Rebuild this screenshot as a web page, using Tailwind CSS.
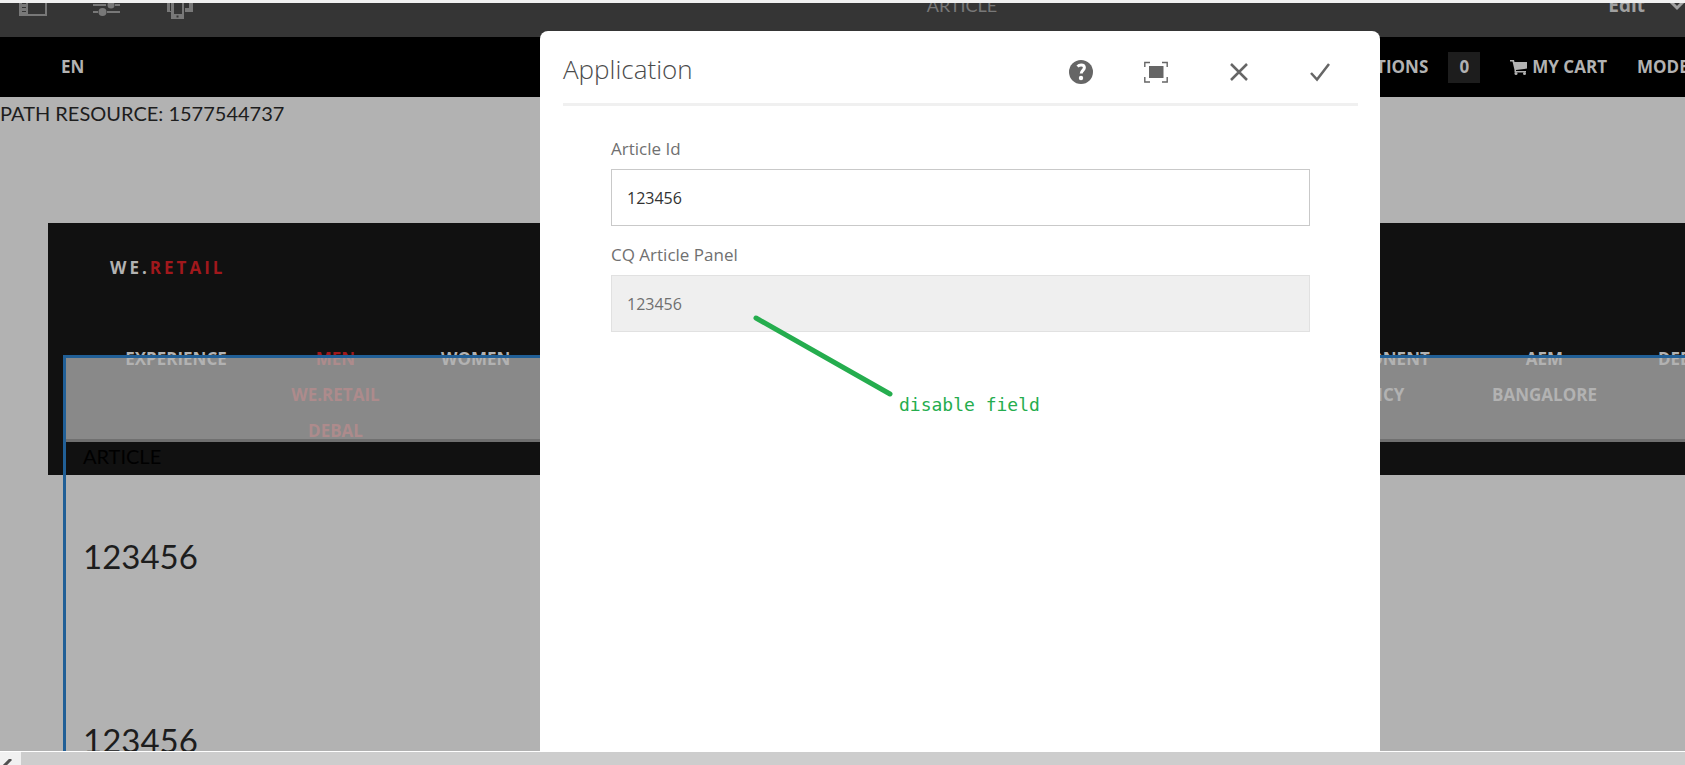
<!DOCTYPE html>
<html lang="en" class="h-full">
<head>
  <meta charset="UTF-8">
  <meta name="viewport" content="width=device-width, initial-scale=1.0">
  <title>Article</title>
  <script src="https://cdn.jsdelivr.net/npm/@tailwindcss/browser@4"></script>
</head>
<body class="relative flex h-full flex-col overflow-hidden bg-[#b2b2b2] font-['Lato',sans-serif] text-[#1d1d1d]">
  <!-- Editor toolbar, scrolled partly out of view -->
  <div class="h-[3px] shrink-0 bg-[#f0f0f0]"></div>
  <div class="h-[34px] shrink-0 overflow-hidden bg-[#353535]">
    <div class="-mt-[30px] flex h-16 items-center text-[#787878]">
      <div class="flex w-[55%] items-center gap-[46px] pl-[19px]">
        <button type="button" aria-label="Side panel">
          <svg class="h-[22px] w-7" viewBox="0 0 28 22" fill="none" stroke="currentColor" stroke-width="2">
            <rect x="1" y="1" width="26" height="20"/>
            <path d="M1 1h8v20H1z" fill="currentColor" stroke="none"/>
            <path d="M3 9.500h4M3 13.500h4M3 17.500h4" stroke="#353535" stroke-width="1"/>
          </svg>
        </button>
        <button type="button" aria-label="Page information">
          <svg class="h-[22px] w-7" viewBox="0 0 28 22" fill="none" stroke="currentColor" stroke-width="2">
            <path d="M0 3h8M15 3h12M0 11h13M22 11h5M0 18h5M14 18h13"/>
            <circle cx="11" cy="3" r="3.500" fill="currentColor" stroke="none"/>
            <circle cx="18" cy="11" r="3.500" fill="currentColor" stroke="none"/>
            <circle cx="9.500" cy="18" r="4" fill="currentColor" stroke="none"/>
          </svg>
        </button>
        <button type="button" aria-label="Emulator">
          <svg class="h-7 w-7" viewBox="0 0 28 28" fill="currentColor">
            <path d="M0 2h16v4h-2V4H3v16h1v1H0z"/>
            <path fill-rule="evenodd" d="M4 5h13v23H4zM7 7v16h8V7zM9.500 24.500v2h2v-2z"/>
            <path d="M19 6h7v15h-8v-4h4v-7h-3z"/>
          </svg>
        </button>
      </div>
      <h1 class="text-[18px]">ARTICLE</h1>
      <button type="button" class="ml-auto flex items-center gap-6 font-['Open_Sans',sans-serif] text-[19px] font-bold text-[#a0a0a0]">
        Edit
        <svg class="h-3 w-4" viewBox="0 0 16 12" fill="none" stroke="currentColor" stroke-width="3"><path d="M1 2l7 7 7-7"/></svg>
      </button>
    </div>
  </div>

  <!-- Site navigation -->
  <nav class="flex h-[60px] shrink-0 items-center justify-between bg-black pl-[61px] font-['Open_Sans',sans-serif] text-[17px] font-bold whitespace-nowrap text-[#b2b2b2]">
    <a href="#">EN</a>
    <div class="flex items-center">
      <a href="#">PROMOTIONS</a>
      <span class="ml-5 flex h-[31px] w-8 items-center justify-center bg-[#1d1d1d]">0</span>
      <a href="#" class="ml-[30px] flex items-center gap-1">
        <svg class="h-4 w-[18px]" viewBox="0 0 18 16" fill="currentColor">
          <path d="M0 1h4l.5 2H17v6.500L6 11v1h10v1.500H4.500V11L2.500 2.500H0z"/>
          <circle cx="6" cy="14.500" r="1.500"/>
          <circle cx="14.500" cy="14.500" r="1.500"/>
        </svg>
        MY CART
      </a>
      <a href="#" class="ml-[30px] w-12">MODE</a>
    </div>
  </nav>

  <main class="relative flex-1 overflow-hidden">
    <p class="h-[126px] pt-px text-[20px] leading-[30px]">PATH RESOURCE: 1577544737</p>

    <header class="ml-12 h-[252px] overflow-hidden bg-[#111] pt-[33px] font-['Open_Sans',sans-serif] text-[17px] font-bold text-[#b2b2b2]">
      <a href="#" class="ml-[62px] block leading-6 tracking-[3px]">WE.<span class="text-[#a1181c]">RETAIL</span></a>
      <div class="mt-[61px] flex justify-between pl-[74px] text-center leading-9 whitespace-nowrap">
        <ul class="flex gap-[60px]">
          <li class="w-[108px]"><a href="#">EXPERIENCE</a></li>
          <li class="w-[91px] text-[#a1181c]">
            <a href="#">MEN</a>
            <ul>
              <li><a href="#">WE.RETAIL</a></li>
              <li><a href="#">DEBAL</a></li>
            </ul>
          </li>
          <li class="w-[68px]"><a href="#">WOMEN</a></li>
        </ul>
        <ul class="flex gap-[60px]">
          <li class="w-[114px]">
            <a href="#">COMPONENT</a>
            <ul>
              <li><a href="#">POLICY</a></li>
            </ul>
          </li>
          <li class="w-[107px]">
            <a href="#">AEM</a>
            <ul>
              <li><a href="#">BANGALORE</a></li>
            </ul>
          </li>
          <li class="w-[27px] text-left"><a href="#">DEBAL</a></li>
        </ul>
      </div>
    </header>

    <!-- Selected component outline -->
    <section class="absolute top-[258px] -right-[3px] -bottom-[3px] left-[63px] overflow-hidden border-[3px] border-[#215f96]">
      <div class="h-[84px] border-b-[3px] border-[#707070] bg-[#b2b2b2]/75 bg-clip-padding"></div>
      <div class="px-[17px]">
        <h2 class="text-[20px] leading-7 text-black">ARTICLE</h2>
        <p class="mt-[66px] text-[33px] leading-10">123456</p>
        <p class="mt-36 text-[33px] leading-10">123456</p>
      </div>
    </section>
  </main>

  <!-- Horizontal scrollbar -->
  <div class="flex h-[14px] shrink-0 border-t border-white bg-[#cdcdcd]">
    <button type="button" aria-label="Scroll left" class="w-[21px] overflow-hidden bg-[#f1f1f1]">
      <svg class="mt-[7px] ml-[2px] h-[14px] w-[10px]" viewBox="0 0 10 14" fill="none" stroke="#505050" stroke-width="3"><path d="M9 0L2 7l7 7"/></svg>
    </button>
  </div>

  <!-- Dialog -->
  <form role="dialog" aria-labelledby="dialog-title" class="absolute top-[31px] bottom-[13px] left-[540px] w-[840px] rounded-t-lg bg-white pr-[22px] pl-[23px] font-['Open_Sans',sans-serif]">
    <div class="flex h-[75px] border-b-[3px] border-[#f0f0f0] text-[#666]">
      <h2 id="dialog-title" class="mr-auto pt-5 text-[26px] leading-9 font-light text-[#4b4b4b]">Application</h2>
      <button type="button" aria-label="Help" class="flex w-[70px] justify-center pt-[29px]">
        <svg class="size-6" viewBox="0 0 24 24">
          <circle cx="12" cy="12" r="12" fill="currentColor"/>
          <path d="M8.500 6.500C9.500 5.500 11 5 12.200 5c2 0 3.200 1.200 3.200 2.800 0 2.400-3.200 2.800-3.200 5.700" fill="none" stroke="white" stroke-width="3"/>
          <circle cx="12" cy="18" r="2.200" fill="white"/>
        </svg>
      </button>
      <button type="button" aria-label="Toggle fullscreen" class="flex w-[80px] justify-center pt-[29px]">
        <svg class="size-6" viewBox="0 0 24 24" fill="none" stroke="currentColor">
          <path d="M.8 7V2.500H6M18 2.500h5.200V7M.8 17v5H6M18 22h5.200v-5" stroke-width="1.400"/>
          <rect x="5" y="6" width="14.500" height="12" fill="currentColor" stroke="none"/>
        </svg>
      </button>
      <button type="button" aria-label="Cancel" class="flex w-[86px] justify-center pt-[29px]">
        <svg class="size-6" viewBox="0 0 24 24" fill="none" stroke="currentColor" stroke-width="2.500"><path d="M4 4l16 16M20 4L4 20"/></svg>
      </button>
      <button type="submit" aria-label="Done" class="flex w-[76px] justify-center pt-[29px]">
        <svg class="size-6" viewBox="0 0 24 24" fill="none" stroke="currentColor" stroke-width="2.500"><path d="M3 13l6 6.500L21 4"/></svg>
      </button>
    </div>

    <div class="flex flex-col gap-[17px] px-12 pt-[31px] text-[17px]">
      <div>
        <label for="articleId" class="mb-2 block leading-6 text-[#707070]">Article Id</label>
        <input id="articleId" type="text" value="123456" class="block h-[57px] w-full border border-[#c9c9c9] px-[15px] text-[16px] text-[#323232]">
      </div>
      <div>
        <label for="articlePanel" class="mb-2 block leading-6 text-[#707070]">CQ Article Panel</label>
        <input id="articlePanel" type="text" value="123456" disabled class="block h-[57px] w-full border border-[#e1e1e1] bg-[#efefef] px-[15px] text-[16px] text-[#707070]">
      </div>
    </div>

    <!-- Callout -->
    <div class="pointer-events-none absolute top-[282px] left-[211px] flex items-end text-[#25ad4e]">
      <svg class="h-[86px] w-[148px]" viewBox="0 0 148 86" fill="none" stroke="currentColor" stroke-width="5" stroke-linecap="round"><path d="M5 5L139 81"/></svg>
      <span class="-mb-5 font-['DejaVu_Sans_Mono',monospace] text-[18px] leading-7">disable field</span>
    </div>
  </form>
</body>
</html>
